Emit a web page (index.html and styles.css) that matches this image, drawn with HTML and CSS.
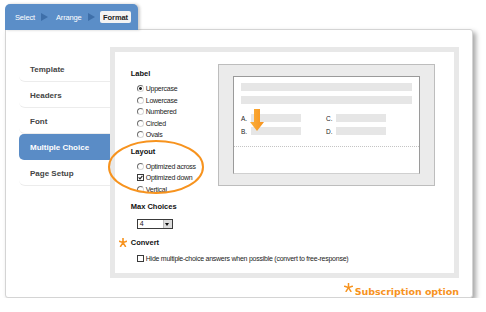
FILE: index.html
```html
<!DOCTYPE html>
<html lang="en">
<head>
    <meta charset="UTF-8">
    <title>Format - Multiple Choice</title>
    <link rel="stylesheet" href="styles.css">
</head>
<body>

<div class="wizard">
    <!-- Kroki kreatora -->
    <div class="steps">
        <span class="step">Select</span>
        <span class="step-arrow"></span>
        <span class="step">Arrange</span>
        <span class="step-arrow"></span>
        <span class="step current">Format</span>
    </div>

    <div class="panel">
        <div class="panel-body">
            <ul class="side-nav">
                <li>Template</li>
                <li>Headers</li>
                <li>Font</li>
                <li class="active">Multiple Choice</li>
                <li>Page Setup</li>
            </ul>

            <div class="settings">
                <div class="settings-top">
                    <div class="options">
                        <h3>Label</h3>
                        <div class="option"><span class="radio checked"></span>Uppercase</div>
                        <div class="option"><span class="radio"></span>Lowercase</div>
                        <div class="option"><span class="radio"></span>Numbered</div>
                        <div class="option"><span class="radio"></span>Circled</div>
                        <div class="option"><span class="radio"></span>Ovals</div>

                        <h3 class="group">Layout</h3>
                        <div class="option"><span class="radio"></span>Optimized across</div>
                        <div class="option"><span class="check checked"><svg viewBox="0 0 5 5"><path d="M0.6 2.4 L2 3.9 L4.4 0.8" fill="none" stroke="#222" stroke-width="1.1"/></svg></span>Optimized down</div>
                        <div class="option"><span class="radio"></span>Vertical</div>

                        <h3 class="group max">Max Choices</h3>
                        <div class="fake-select">
                            <span class="value">4</span>
                            <span class="drop"></span>
                        </div>
                    </div>

                    <!-- Podglad ukladu -->
                    <div class="preview">
                        <div class="sheet">
                            <div class="sheet-body">
                                <div class="line"></div>
                                <div class="line"></div>
                                <div class="choices">
                                    <div class="choice"><span class="letter">A.</span><span class="answer"></span></div>
                                    <div class="choice"><span class="letter">C.</span><span class="answer"></span></div>
                                    <div class="choice"><span class="letter">B.</span><span class="answer"></span></div>
                                    <div class="choice"><span class="letter">D.</span><span class="answer"></span></div>
                                </div>
                            </div>
                            <div class="sheet-rule"></div>
                            <svg class="down-arrow" width="16" height="24" viewBox="0 0 16 24">
                                <defs>
                                    <linearGradient id="arrowFill" x1="0" y1="0" x2="1" y2="0">
                                        <stop offset="0" stop-color="#fbb03b"/>
                                        <stop offset="1" stop-color="#f7931e"/>
                                    </linearGradient>
                                </defs>
                                <path d="M5 1 H11 V14 H15 L8 23 L1 14 H5 Z" fill="url(#arrowFill)"/>
                            </svg>
                        </div>
                    </div>
                </div>

                <div class="convert">
                    <h3><svg class="star" width="8" height="9" viewBox="0 0 8 9"><path d="M4 4.6 V0.3 M4 4.6 L0.2 3.3 M4 4.6 L7.8 3.3 M4 4.6 L1.6 8.4 M4 4.6 L6.4 8.4" stroke="#f7931e" stroke-width="1.6" stroke-linecap="round"/></svg>Convert</h3>
                    <div class="option"><span class="check"></span>Hide multiple-choice answers when possible (convert to free-response)</div>
                </div>

                <!-- Zaznaczenie sekcji Layout -->
                <svg class="highlight" width="100" height="56" viewBox="0 0 100 56">
                    <ellipse cx="50" cy="28" rx="47" ry="26" fill="none" stroke="#f7931e" stroke-width="2"/>
                </svg>
            </div>
        </div>

        <div class="note"><svg class="star" width="9" height="9" viewBox="0 0 8 9"><path d="M4 4.6 V0.3 M4 4.6 L0.2 3.3 M4 4.6 L7.8 3.3 M4 4.6 L1.6 8.4 M4 4.6 L6.4 8.4" stroke="#f7931e" stroke-width="1.5" stroke-linecap="round"/></svg>Subscription option</div>
    </div>
</div>

</body>
</html>
```

FILE: styles.css
```css
/* Ogolne */
* {
    box-sizing: border-box;
}

body {
    margin: 0;
    background-color: #fff;
    font-family: "Liberation Sans", Arial, sans-serif;
    color: #222;
}

.wizard {
    padding: 4px 0 0 5px;
}

/* Pasek krokow */
.steps {
    position: relative;
    z-index: 1;
    display: flex;
    align-items: center;
    width: 133px;
    height: 26px;
    padding: 0 5px 0 10px;
    background-color: #5b8ec8;
    border-radius: 5px 5px 0 0;
    box-shadow: 2px 0 3px rgba(0, 0, 0, 0.2);
}

.step {
    font-size: 7.5px;
    letter-spacing: -0.15px;
    color: #fff;
}

.step-arrow {
    width: 0;
    height: 0;
    margin: 0 8px 0 6px;
    border-left: 7px solid #3e6fa9;
    border-top: 4px solid transparent;
    border-bottom: 4px solid transparent;
}

.step-arrow + .step.current {
    margin-left: -3px;
}

.step.current {
    display: flex;
    align-items: center;
    height: 12px;
    padding: 0 3.5px;
    background-color: #f3f3f3;
    border-radius: 2px;
    color: #1d1d1d;
    font-weight: bold;
    letter-spacing: -0.1px;
}

/* Panel glowny */
.panel {
    width: 468px;
    height: 269px;
    margin-top: -1px;
    padding: 17px 13px 0;
    border: 1px solid #d4d4d4;
    border-radius: 0 3px 3px 3px;
    background-color: #fff;
    box-shadow: 3px 3px 5px rgba(0, 0, 0, 0.35);
}

.panel-body {
    display: flex;
}

/* Nawigacja boczna */
.side-nav {
    list-style: none;
    width: 91px;
    margin: 9px 0 0;
    padding: 0;
}

.side-nav li {
    height: 26px;
    line-height: 27px;
    padding-left: 11px;
    border-bottom: 1px solid #ececec;
    border-bottom-left-radius: 6px;
    font-size: 8px;
    font-weight: bold;
    color: #444;
}

.side-nav li.active {
    background-color: #5a8cc6;
    border-bottom-color: transparent;
    border-radius: 5px 0 0 5px;
    color: #fff;
}

/* Ustawienia */
.settings {
    position: relative;
    width: 350px;
    height: 231px;
    border: 5px solid #e8e8e8;
    background-color: #fff;
}

.settings-top {
    display: flex;
    align-items: flex-start;
}

.options {
    padding: 17px 0 0 16px;
}

h3 {
    margin: 0;
    height: 10px;
    line-height: 10px;
    font-size: 7.5px;
    font-weight: bold;
    color: #111;
}

.options h3 {
    margin-bottom: 4px;
}

.options h3.group {
    margin-top: 6px;
}

.options h3.max {
    margin-top: 7px;
    margin-bottom: 0;
}

.option {
    display: flex;
    align-items: center;
    height: 11.5px;
    padding-left: 6px;
    font-size: 7px;
    letter-spacing: -0.25px;
    color: #222;
    white-space: nowrap;
}

.radio {
    width: 7px;
    height: 7px;
    margin-right: 2px;
    border: 1px solid;
    border-color: #707070 #d8d8d8 #d8d8d8 #707070;
    border-radius: 50%;
    background-color: #fff;
}

.radio.checked {
    background: radial-gradient(circle, #222 1.1px, #fff 1.7px);
}

.check {
    display: flex;
    width: 7px;
    height: 7px;
    margin-right: 2px;
    border: 1px solid #3a3a3a;
    background-color: #fff;
}

.check svg {
    width: 5px;
    height: 5px;
}

.fake-select {
    display: flex;
    width: 36px;
    height: 10px;
    margin: 7px 0 0 6px;
    border: 1px solid #3a3a3a;
    background-color: #fff;
}

.fake-select .value {
    flex: 1;
    padding-left: 2px;
    font-size: 7px;
    line-height: 8px;
}

.fake-select .drop {
    position: relative;
    width: 9px;
    background-color: #dcdcdc;
    border-left: 1px solid #bbb;
}

.fake-select .drop::after {
    content: "";
    position: absolute;
    left: 1.5px;
    top: 2.5px;
    border-top: 3px solid #111;
    border-left: 2.5px solid transparent;
    border-right: 2.5px solid transparent;
}

/* Podglad */
.preview {
    flex-shrink: 0;
    width: 217px;
    height: 122px;
    margin: 12px 19px 0 auto;
    padding: 11px 14px 0;
    border: 1px solid #bdbdbd;
    background-color: #ebebeb;
}

.sheet {
    position: relative;
    height: 98px;
    border: 1px solid #9a9a9a;
    border-bottom-color: #d0d0d0;
    background-color: #fff;
}

.sheet-body {
    padding: 6px 7px 11px;
}

.line {
    height: 8px;
    background-color: #e6e6e6;
}

.line + .line {
    margin-top: 5px;
}

.choices {
    display: grid;
    grid-template-columns: 85px 1fr;
    row-gap: 5px;
    margin-top: 10px;
}

.choice {
    display: flex;
    align-items: center;
    height: 8px;
}

.letter {
    width: 10px;
    font-size: 6.5px;
    color: #222;
}

.answer {
    width: 50px;
    height: 8px;
    background-color: #e6e6e6;
}

.sheet-rule {
    border-top: 1px dotted #c4c4c4;
}

.down-arrow {
    position: absolute;
    left: 15px;
    top: 31px;
}

.highlight {
    position: absolute;
    left: -9px;
    top: 87px;
    overflow: visible;
}

/* Konwersja */
.convert {
    padding: 9px 0 0 16px;
}

.convert h3 {
    display: flex;
    align-items: center;
    margin-bottom: 5px;
}

.convert h3 .star {
    margin: -2px 4px 0 -12px;
}

/* Opcja subskrypcji */
.note {
    display: flex;
    justify-content: flex-end;
    align-items: flex-end;
    padding-top: 5px;
    line-height: 12px;
    font-family: "DejaVu Sans", sans-serif;
    font-size: 9.5px;
    font-weight: bold;
    letter-spacing: -0.05px;
    color: #f7931e;
}

.note .star {
    margin: 0 2px 6px 0;
}
```
